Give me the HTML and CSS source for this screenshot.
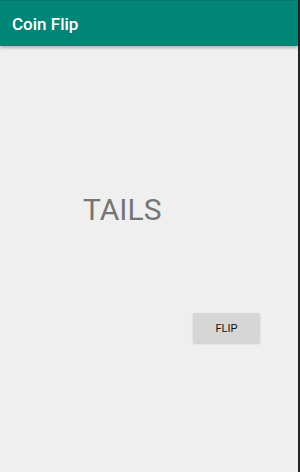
FILE: index.html
```html
<!DOCTYPE html>
<html lang="en">
<head>
    <meta charset="UTF-8">
    <meta name="viewport" content="width=device-width, initial-scale=1.0">
    <title>Coin Flip</title>
    <link rel="stylesheet" href="styles.css">
</head>
<body>

<div class="screen">
    <div class="app-bar">Coin Flip</div>

    <div class="content">
        <div class="result">TAILS</div>
        <button class="flip-btn">FLIP</button>
    </div>
</div>

</body>
</html>
```

FILE: styles.css
```css
html, body {
    margin: 0;
    padding: 0;
}
body {
    font-family: Roboto, "Noto Sans", sans-serif;
    background-color: #efefef;
}
.screen {
    width: 298px;
    height: 472px;
    border-right: 2px solid #222;
    display: flex;
    flex-direction: column;
    background-color: #efefef;
}
.app-bar {
    height: 46px;
    box-sizing: border-box;
    padding-left: 12px;
    display: flex;
    align-items: center;
    background-color: #008577;
    border-top: 1px solid #00796b;
    color: white;
    font-size: 17px;
    font-weight: 500;
    box-shadow: 0 2px 3px rgba(0, 0, 0, 0.25);
    position: relative;
    z-index: 1;
}
.content {
    flex: 1;
    display: flex;
    flex-direction: column;
}
.result {
    margin-top: 149px;
    padding-left: 83px;
    font-size: 30px;
    line-height: 30px;
    color: #757575;
}
.flip-btn {
    align-self: flex-end;
    margin-top: 88px;
    margin-right: 38px;
    width: 67px;
    height: 30px;
    border: none;
    border-radius: 2px;
    background-color: #d6d6d6;
    box-shadow: 0 1px 2px rgba(0, 0, 0, 0.15);
    font-family: Roboto, sans-serif;
    font-size: 11px;
    font-weight: 400;
    color: #111;
    padding: 0;
}
```
